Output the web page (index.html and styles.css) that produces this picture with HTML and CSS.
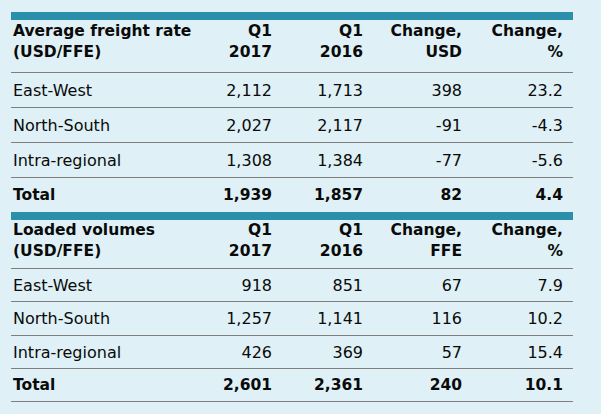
FILE: index.html
```html
<!DOCTYPE html>
<html>
<head>
<meta charset="utf-8">
<link rel="stylesheet" href="styles.css">
</head>
<body>
<div class="panel">
  <table class="grid first">
    <colgroup>
      <col class="c1"><col class="c2"><col class="c3"><col class="c4"><col class="c5">
    </colgroup>
    <thead>
      <tr class="head">
        <th class="label">Average freight rate<br>(USD/FFE)</th>
        <th>Q1<br>2017</th>
        <th>Q1<br>2016</th>
        <th>Change,<br>USD</th>
        <th class="last">Change,<br>%</th>
      </tr>
    </thead>
    <tbody>
      <tr><td class="label">East-West</td><td>2,112</td><td>1,713</td><td>398</td><td class="last">23.2</td></tr>
      <tr><td class="label">North-South</td><td>2,027</td><td>2,117</td><td>-91</td><td class="last">-4.3</td></tr>
      <tr><td class="label">Intra-regional</td><td>1,308</td><td>1,384</td><td>-77</td><td class="last">-5.6</td></tr>
      <tr class="total"><td class="label">Total</td><td>1,939</td><td>1,857</td><td>82</td><td class="last">4.4</td></tr>
    </tbody>
  </table>
  <table class="grid second">
    <colgroup>
      <col class="c1"><col class="c2"><col class="c3"><col class="c4"><col class="c5">
    </colgroup>
    <thead>
      <tr class="head">
        <th class="label">Loaded volumes<br>(USD/FFE)</th>
        <th>Q1<br>2017</th>
        <th>Q1<br>2016</th>
        <th>Change,<br>FFE</th>
        <th class="last">Change,<br>%</th>
      </tr>
    </thead>
    <tbody>
      <tr><td class="label">East-West</td><td>918</td><td>851</td><td>67</td><td class="last">7.9</td></tr>
      <tr><td class="label">North-South</td><td>1,257</td><td>1,141</td><td>116</td><td class="last">10.2</td></tr>
      <tr><td class="label">Intra-regional</td><td>426</td><td>369</td><td>57</td><td class="last">15.4</td></tr>
      <tr class="total"><td class="label">Total</td><td>2,601</td><td>2,361</td><td>240</td><td class="last">10.1</td></tr>
    </tbody>
  </table>
</div>
</body>
</html>
```

FILE: styles.css
```css
html, body {
  margin: 0;
  padding: 0;
  background: #dff1f6;
}

body {
  font-family: "DejaVu Sans", Verdana, sans-serif;
  font-size: 16px;
  color: #0a0a0a;
}

.panel {
  padding: 12px 0 0 11px;
  width: 562px;
}

.grid {
  width: 562px;
  border-collapse: collapse;
  table-layout: fixed;
}

.c1 { width: 190px; }
.c2 { width: 71px; }
.c3 { width: 91px; }
.c4 { width: 99px; }
.c5 { width: 111px; }

th, td {
  padding: 0;
  text-align: right;
  font-weight: normal;
}

.label {
  text-align: left;
  padding-left: 2px;
}

.last {
  padding-right: 10px;
}

.head th {
  font-size: 15.5px;
  font-weight: bold;
  line-height: 21px;
  vertical-align: top;
  border-top: 8px solid #2b8fab;
  border-bottom: 1px solid #7f7f7f;
}

.first .head th {
  height: 43px;
  padding-top: 1px;
  padding-bottom: 8px;
}

.second .head th {
  height: 41px;
  padding-top: 0;
  padding-bottom: 6px;
}

tbody td {
  height: 34px;
  border-bottom: 1px solid #7f7f7f;
  vertical-align: middle;
}

.second tbody td {
  height: 32px;
}

.second tbody tr:nth-child(2) td {
  height: 33px;
}

.total td {
  font-size: 15.5px;
  font-weight: bold;
}

.first .total td {
  border-bottom: none;
  height: 34px;
}
```
